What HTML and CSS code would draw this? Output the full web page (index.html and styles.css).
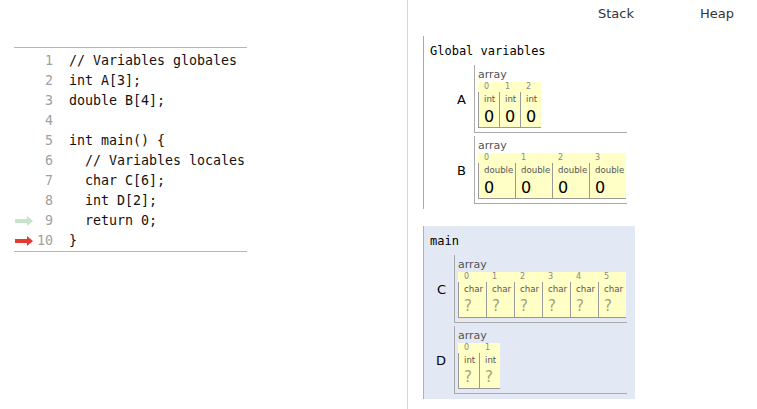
FILE: index.html
```html
<!DOCTYPE html>
<html>
<head>
<meta charset="utf-8">
<link rel="stylesheet" href="styles.css">
</head>
<body>
<div class="page">
  <div class="code-pane">
    <div class="code">
      <div class="line"><span class="gutter"></span><span class="num">1</span><span class="src">// Variables globales</span></div>
      <div class="line"><span class="gutter"></span><span class="num">2</span><span class="src">int A[3];</span></div>
      <div class="line"><span class="gutter"></span><span class="num">3</span><span class="src">double B[4];</span></div>
      <div class="line"><span class="gutter"></span><span class="num">4</span><span class="src"></span></div>
      <div class="line"><span class="gutter"></span><span class="num">5</span><span class="src">int main() {</span></div>
      <div class="line"><span class="gutter"></span><span class="num">6</span><span class="src">  // Variables locales</span></div>
      <div class="line"><span class="gutter"></span><span class="num">7</span><span class="src">  char C[6];</span></div>
      <div class="line"><span class="gutter"></span><span class="num">8</span><span class="src">  int D[2];</span></div>
      <div class="line"><span class="gutter"><svg class="arrow prev" width="18" height="10" viewBox="0 0 18 10"><rect x="0" y="3" width="12.5" height="4"/><polygon points="12,0 18,5 12,10"/></svg></span><span class="num">9</span><span class="src">  return 0;</span></div>
      <div class="line"><span class="gutter"><svg class="arrow cur" width="18" height="10" viewBox="0 0 18 10"><rect x="0" y="3" width="12.5" height="4"/><polygon points="12,0 18,5 12,10"/></svg></span><span class="num">10</span><span class="src">}</span></div>
    </div>
  </div>
  <div class="viz-pane">
    <div class="headers"><span class="hdr-stack">Stack</span><span class="hdr-heap">Heap</span></div>
    <div class="frame">
      <div class="frame-header">Global variables</div>
      <div class="vars">
        <div class="var-name">A</div>
        <div class="var-value">
          <div class="type-tag">array</div>
          <div class="arr">
            <div class="col"><div class="idx">0</div><div class="elt w-int"><div class="etype">int</div><div class="eval">0</div></div></div>
            <div class="col"><div class="idx">1</div><div class="elt w-int"><div class="etype">int</div><div class="eval">0</div></div></div>
            <div class="col"><div class="idx">2</div><div class="elt w-int"><div class="etype">int</div><div class="eval">0</div></div></div>
          </div>
        </div>
        <div class="var-name">B</div>
        <div class="var-value">
          <div class="type-tag">array</div>
          <div class="arr">
            <div class="col"><div class="idx">0</div><div class="elt w-double"><div class="etype">double</div><div class="eval">0</div></div></div>
            <div class="col"><div class="idx">1</div><div class="elt w-double"><div class="etype">double</div><div class="eval">0</div></div></div>
            <div class="col"><div class="idx">2</div><div class="elt w-double"><div class="etype">double</div><div class="eval">0</div></div></div>
            <div class="col"><div class="idx">3</div><div class="elt w-double"><div class="etype">double</div><div class="eval">0</div></div></div>
          </div>
        </div>
      </div>
    </div>
    <div class="frame current">
      <div class="frame-header">main</div>
      <div class="vars">
        <div class="var-name">C</div>
        <div class="var-value">
          <div class="type-tag">array</div>
          <div class="arr">
            <div class="col"><div class="idx">0</div><div class="elt w-char"><div class="etype">char</div><div class="eval unset">?</div></div></div>
            <div class="col"><div class="idx">1</div><div class="elt w-char"><div class="etype">char</div><div class="eval unset">?</div></div></div>
            <div class="col"><div class="idx">2</div><div class="elt w-char"><div class="etype">char</div><div class="eval unset">?</div></div></div>
            <div class="col"><div class="idx">3</div><div class="elt w-char"><div class="etype">char</div><div class="eval unset">?</div></div></div>
            <div class="col"><div class="idx">4</div><div class="elt w-char"><div class="etype">char</div><div class="eval unset">?</div></div></div>
            <div class="col"><div class="idx">5</div><div class="elt w-char"><div class="etype">char</div><div class="eval unset">?</div></div></div>
          </div>
        </div>
        <div class="var-name">D</div>
        <div class="var-value">
          <div class="type-tag">array</div>
          <div class="arr">
            <div class="col"><div class="idx">0</div><div class="elt w-int"><div class="etype">int</div><div class="eval unset">?</div></div></div>
            <div class="col"><div class="idx">1</div><div class="elt w-int"><div class="etype">int</div><div class="eval unset">?</div></div></div>
          </div>
        </div>
      </div>
    </div>
  </div>
</div>
</body>
</html>
```
FILE: styles.css
```css
html, body {
  margin: 0;
  padding: 0;
  background: #fff;
}
.page {
  display: flex;
  width: 757px;
  height: 409px;
  overflow: hidden;
  font-family: "DejaVu Sans", Verdana, sans-serif;
}
.code-pane {
  width: 407px;
  flex: none;
  padding-top: 47px;
  box-sizing: border-box;
}
.code {
  margin-left: 14px;
  width: 233px;
  border-top: 1px solid #b5b5b5;
  border-bottom: 1px solid #b5b5b5;
  padding: 3px 0 0;
  font-family: "DejaVu Sans Mono", "Liberation Mono", monospace;
  font-size: 13.3px;
}
.line {
  display: flex;
  height: 20px;
  line-height: 20px;
  align-items: center;
}
.gutter {
  width: 21px;
  flex: none;
  display: flex;
  align-items: center;
  padding-left: 1px;
  box-sizing: border-box;
}
.arrow { display: block; }
.arrow.prev { fill: #c6e5c8; }
.arrow.cur { fill: #e8392f; }
.num {
  flex: none;
  text-align: right;
  padding-right: 16px;
  box-sizing: border-box;
  width: 49px;
  margin-left: -15px;
  color: #a0a0a0;
}
.src {
  white-space: pre;
  color: #111;
}
.viz-pane {
  flex: 1;
  border-left: 1px solid #d8d8d8;
  padding-left: 15px;
}
.headers {
  display: flex;
  padding-top: 6px;
  height: 16px;
  line-height: 16px;
  font-size: 13px;
  color: #333;
  margin-bottom: 14px;
}
.hdr-stack { margin-left: 175px; }
.hdr-heap { margin-left: 66px; }
.frame {
  width: 212px;
  box-sizing: border-box;
  border-left: 1px solid #aaa;
  padding: 8px 8px 5px 6px;
  margin-bottom: 17px;
}
.frame.current {
  background: #e2e9f4;
  border-left-color: #a6b3b6;
}
.frame-header {
  font-family: "DejaVu Sans Mono", "Liberation Mono", monospace;
  font-size: 12px;
  line-height: 14px;
  color: #000;
  margin-bottom: 7px;
}
.vars {
  display: grid;
  grid-template-columns: 1fr auto;
  row-gap: 3px;
}
.var-name {
  text-align: right;
  padding-right: 8px;
  align-self: center;
  font-size: 13px;
  color: #000;
}
.var-value {
  border-left: 1px solid #aaa;
  border-bottom: 1px solid #aaa;
  padding: 3px 1px 4px 3px;
}
.type-tag {
  font-size: 11px;
  line-height: 14px;
  color: #555;
}
.arr {
  display: flex;
  background: #ffffc6;
  width: max-content;
}
.col {
  display: flex;
  flex-direction: column;
}
.idx {
  height: 10px;
  line-height: 10px;
  font-size: 8px;
  color: #888;
  padding-left: 6px;
}
.elt {
  border-left: 1px solid #999;
  border-bottom: 1px solid #999;
  padding: 2px 0 1px 5px;
  height: 32px;
}
.w-int { width: 15px; }
.w-double { width: 31px; }
.w-char { width: 22px; }
.etype {
  font-size: 8.6px;
  line-height: 11px;
  color: #555;
  white-space: nowrap;
}
.eval {
  font-size: 16px;
  line-height: 19px;
  padding-top: 2px;
  color: #000;
}
.eval.unset {
  color: #a3a37a;
  font-size: 15px;
}
```
